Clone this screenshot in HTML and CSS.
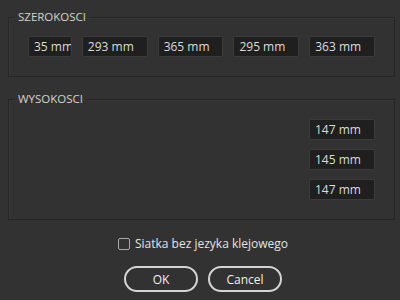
FILE: index.html
```html
<!DOCTYPE html>
<html>
<head>
<meta charset="utf-8">
<link rel="stylesheet" href="styles.css">
</head>
<body>
<div class="dialog">
  <fieldset class="group group-w">
    <legend class="group-title">SZEROKOSCI</legend>
    <div class="row">
      <div class="field field-narrow">35 mm</div>
      <div class="field">293 mm</div>
      <div class="field">365 mm</div>
      <div class="field">295 mm</div>
      <div class="field">363 mm</div>
    </div>
  </fieldset>
  <fieldset class="group group-h">
    <legend class="group-title">WYSOKOSCI</legend>
    <div class="column">
      <div class="field">147 mm</div>
      <div class="field">145 mm</div>
      <div class="field">147 mm</div>
    </div>
  </fieldset>
  <label class="check">
    <input type="checkbox" class="check-box">
    <span class="check-label">Siatka bez jezyka klejowego</span>
  </label>
  <div class="buttons">
    <button class="btn">OK</button>
    <button class="btn">Cancel</button>
  </div>
</div>
</body>
</html>
```
FILE: styles.css
```css
html, body {
  margin: 0;
  padding: 0;
  background: #323232;
  width: 400px;
  height: 300px;
  overflow: hidden;
  font-family: "Open Sans", "DejaVu Sans", sans-serif;
}
.dialog {
  display: flex;
  flex-direction: column;
  padding: 10px 5px 0 8px;
}
.group {
  margin: 0;
  border: 1px solid #262626;
  box-shadow: inset 1px 1px 0 #383838;
  padding: 0;
  min-width: 0;
}
.group-h {
  margin-top: 15px;
}
.group-title {
  margin-left: 6px;
  padding: 0 3px;
  font-size: 11.5px;
  line-height: 14px;
  color: #d2d2d2;
}
.row {
  display: flex;
  gap: 10px;
  padding: 12px 19px 19px 19px;
}
.column {
  display: flex;
  flex-direction: column;
  align-items: flex-end;
  gap: 9px;
  padding: 13px 19px 19px 19px;
}
.field {
  box-sizing: border-box;
  width: 66px;
  height: 21px;
  background: #1f1f1f;
  border: 1px solid #3b3b3b;
  border-radius: 2px;
  padding-left: 5px;
  font-size: 12px;
  line-height: 19px;
  color: #dcdcdc;
  white-space: nowrap;
  overflow: hidden;
}
.field-narrow {
  width: 44px;
}
.check {
  display: flex;
  align-items: center;
  justify-content: center;
  gap: 5px;
  margin-top: 17px;
  margin-left: 3px;
}
.check-box {
  appearance: none;
  -webkit-appearance: none;
  margin: 0;
  width: 12px;
  height: 12px;
  box-sizing: border-box;
  border: 1px solid #a8a8a8;
  border-radius: 2px;
  background: transparent;
}
.check-label {
  font-size: 12px;
  line-height: 14px;
  color: #e2e2e2;
}
.buttons {
  display: flex;
  justify-content: center;
  gap: 10px;
  margin-top: 15px;
  margin-left: 3px;
}
.btn {
  box-sizing: border-box;
  width: 74px;
  height: 26px;
  border: 2px solid #d4d4d4;
  border-radius: 13px;
  background: #323232;
  color: #f0f0f0;
  font-family: "Open Sans", "DejaVu Sans", sans-serif;
  font-size: 12px;
  padding: 0;
}
```
